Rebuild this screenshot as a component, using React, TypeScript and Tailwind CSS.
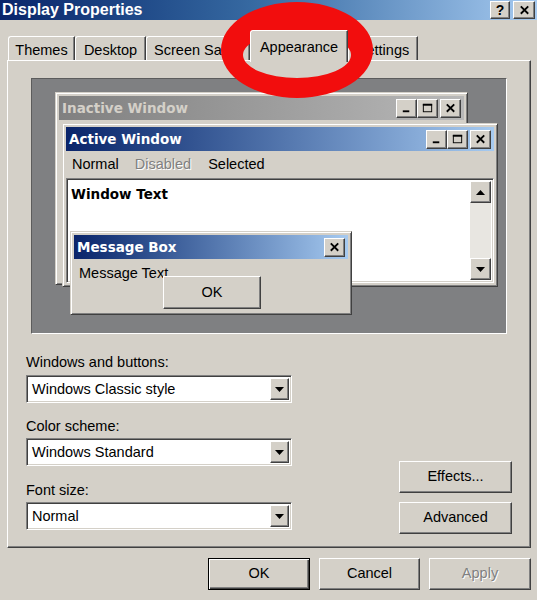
import React from 'react';

const raised =
  'border border-t-white border-l-white border-r-[#404040] border-b-[#404040] bg-[#d4d0c8] shadow-[inset_-1px_-1px_0_#808080]';
const sunken =
  'border border-t-[#808080] border-l-[#808080] border-r-white border-b-white shadow-[inset_1px_1px_0_#404040,inset_-1px_-1px_0_#d4d0c8]';
const frame =
  'border border-t-[#d4d0c8] border-l-[#d4d0c8] border-r-[#404040] border-b-[#404040] bg-[#d4d0c8] shadow-[inset_1px_1px_0_#fff,inset_-1px_-1px_0_#808080]';

type GlyphKind = 'min' | 'max' | 'close';

function Glyph({ kind }: { kind: GlyphKind }) {
  return (
    <svg viewBox="0 0 16 14" className="h-[13px] w-[15px]">
      {kind === 'min' && <rect x="4" y="9" width="7" height="2" fill="#000" />}
      {kind === 'max' && (
        <>
          <rect x="3.5" y="2.5" width="9" height="8" fill="none" stroke="#000" />
          <rect x="3" y="2" width="10" height="2" fill="#000" />
        </>
      )}
      {kind === 'close' && (
        <path d="M4 2.5l8 8M12 2.5l-8 8" stroke="#000" strokeWidth="2" />
      )}
    </svg>
  );
}

function CapButton({ kind }: { kind: GlyphKind }) {
  return (
    <div className={`${raised} flex h-[19px] w-[21px] items-center justify-center`}>
      <Glyph kind={kind} />
    </div>
  );
}

function CapButtons() {
  return (
    <div className="ml-auto flex gap-[2px]">
      <div className="flex">
        <CapButton kind="min" />
        <CapButton kind="max" />
      </div>
      <CapButton kind="close" />
    </div>
  );
}

function Arrow({ dir }: { dir: 'up' | 'down' }) {
  return (
    <svg viewBox="0 0 9 5" className="h-[5px] w-[9px]">
      <path d={dir === 'up' ? 'M4.5 0L9 5H0z' : 'M0 0h9L4.5 5z'} fill="#000" />
    </svg>
  );
}

function Select({ value }: { value: string }) {
  return (
    <div className={`${sunken} flex h-[28px] w-[266px] items-center bg-white p-[2px]`}>
      <span className="flex-1 pl-[3px] text-[14.5px] leading-[18px]">{value}</span>
      <div className={`${raised} flex h-full w-[19px] items-center justify-center`}>
        <Arrow dir="down" />
      </div>
    </div>
  );
}

function Button({
  children,
  className = '',
}: {
  children: React.ReactNode;
  className?: string;
}) {
  return (
    <div
      className={`${raised} flex h-[32px] items-center justify-center text-[14.5px] ${className}`}
    >
      {children}
    </div>
  );
}

const tabs = [
  { label: 'Themes', w: 'w-[67px]' },
  { label: 'Desktop', w: 'w-[71px]' },
  { label: 'Screen Saver', w: 'w-[104px]' },
  { label: 'Appearance', w: 'w-[98px]', active: true },
  { label: 'Settings', w: 'w-[70px]' },
];

export default function App() {
  return (
    <div className="relative flex h-[600px] w-[537px] flex-col overflow-hidden bg-[#d4d0c8] font-['Liberation_Sans',Arial,sans-serif] text-black">
      {/* caption */}
      <div className="flex h-[20px] items-center bg-linear-to-r from-[#0a246a] via-[#3a6ea5] to-[#a6caf0] pl-[2px] pr-[2px]">
        <span className="text-[16px] font-bold leading-[20px] text-white">Display Properties</span>
        <div className="ml-auto flex gap-[3px]">
          <div className={`${raised} flex h-[18px] w-[20px] items-center justify-center text-[14px] font-bold leading-none`}>
            ?
          </div>
          <div className={`${raised} flex h-[18px] w-[22px] items-center justify-center`}>
            <Glyph kind="close" />
          </div>
        </div>
      </div>

      {/* tabs */}
      <div className="mt-[10px] flex h-[30px] items-end pl-[8px]">
        {tabs.map((t) =>
          t.active ? (
            <div
              key={t.label}
              className={`relative z-10 -mb-[2px] flex h-[32px] ${t.w} justify-center rounded-tl-[3px] border-l border-t border-r border-l-white border-t-white border-r-[#404040] bg-[#d4d0c8] pt-[7px] text-[14.5px] leading-[18px] shadow-[inset_-1px_0_0_#808080]`}
            >
              {t.label}
            </div>
          ) : (
            <div
              key={t.label}
              className={`flex h-[24px] ${t.w} justify-center overflow-hidden rounded-tl-[3px] border-l border-t border-r border-l-white border-t-white border-r-[#404040] pt-[4px] text-[14.5px] leading-[18px] shadow-[inset_-1px_0_0_#808080]`}
            >
              {t.label}
            </div>
          ),
        )}
      </div>

      {/* tab panel */}
      <div className="ml-[7px] flex h-[488px] w-[524px] flex-col border border-t-white border-l-white border-r-[#404040] border-b-[#404040] shadow-[inset_-1px_-1px_0_#808080]">
        {/* preview */}
        <div className="relative ml-[23px] mt-[17px] h-[256px] w-[476px] border border-t-[#5c5c5c] border-l-[#5c5c5c] border-r-white border-b-white bg-[#7f8082]">
          {/* inactive window */}
          <div className={`${frame} absolute left-[23px] top-[13px] flex h-[193px] w-[413px] flex-col p-[3px]`}>
            <div className="flex h-[24px] items-center bg-linear-to-r from-[#808080] to-[#b8b8b8] px-[3px]">
              <span className="font-['DejaVu_Sans',sans-serif] text-[13.5px] font-bold text-[#d4d0c8]">
                Inactive Window
              </span>
              <CapButtons />
            </div>
          </div>

          {/* active window */}
          <div className={`${frame} absolute left-[30px] top-[44px] flex h-[164px] w-[436px] flex-col p-[3px]`}>
            <div className="flex h-[24px] shrink-0 items-center bg-linear-to-r from-[#0a246a] to-[#a6caf0] px-[3px]">
              <span className="font-['DejaVu_Sans',sans-serif] text-[13.5px] font-bold text-white">
                Active Window
              </span>
              <CapButtons />
            </div>
            <div className="flex h-[27px] shrink-0 items-center gap-[16px] pl-[6px] text-[14.5px]">
              <span>Normal</span>
              <span className="text-[#808080] [text-shadow:1px_1px_0_#fff]">Disabled</span>
              <span className="ml-[1px]">Selected</span>
            </div>
            <div className={`${sunken} flex flex-1 bg-white p-[2px]`}>
              <div className="flex-1 pl-[2px] pt-[4px] font-['DejaVu_Sans',sans-serif] text-[13.5px] font-bold leading-[18px]">
                Window Text
              </div>
              <div className="flex w-[21px] flex-col bg-[#e8e6e1]">
                <div className={`${raised} flex h-[22px] items-center justify-center`}>
                  <Arrow dir="up" />
                </div>
                <div className="flex-1" />
                <div className={`${raised} flex h-[22px] items-center justify-center`}>
                  <Arrow dir="down" />
                </div>
              </div>
            </div>
          </div>

          {/* message box */}
          <div className={`${frame} absolute left-[38px] top-[152px] flex h-[84px] w-[282px] flex-col p-[3px]`}>
            <div className="flex h-[24px] shrink-0 items-center bg-linear-to-r from-[#0a246a] to-[#a6caf0] px-[3px]">
              <span className="font-['DejaVu_Sans',sans-serif] text-[13.5px] font-bold text-white">
                Message Box
              </span>
              <div className="ml-auto">
                <CapButton kind="close" />
              </div>
            </div>
            <div className="pl-[5px] pt-[5px] text-[14.5px] leading-[18px]">Message Text</div>
            <div className={`${raised} relative -mt-[6px] ml-[89px] flex h-[33px] w-[98px] items-center justify-center text-[14.5px]`}>
              OK
            </div>
          </div>
        </div>

        {/* options */}
        <div className="mt-[19px] flex pl-[18px]">
          <div className="flex flex-col">
            <div className="text-[14.5px] leading-[18px]">Windows and buttons:</div>
            <div className="mt-[4px]">
              <Select value="Windows Classic style" />
            </div>
            <div className="mt-[14px] text-[14.5px] leading-[18px]">Color scheme:</div>
            <div className="mt-[3px]">
              <Select value="Windows Standard" />
            </div>
            <div className="mt-[15px] text-[14.5px] leading-[18px]">Font size:</div>
            <div className="mt-[3px]">
              <Select value="Normal" />
            </div>
          </div>
          <div className="ml-[107px] mt-[108px] flex w-[113px] flex-col gap-[9px]">
            <Button>Effects...</Button>
            <Button>Advanced</Button>
          </div>
        </div>
      </div>

      {/* dialog buttons */}
      <div className="mt-[10px] flex justify-end gap-[9px] pr-[6px]">
        <div className="flex h-[32px] w-[102px] items-center justify-center border border-black bg-[#d4d0c8] text-[14.5px] shadow-[inset_1px_1px_0_#fff,inset_-1px_-1px_0_#404040,inset_-2px_-2px_0_#808080]">
          OK
        </div>
        <Button className="w-[101px]">Cancel</Button>
        <Button className="w-[102px] text-[#808080] [text-shadow:1px_1px_0_#fff]">Apply</Button>
      </div>

      {/* red marker circle */}
      <svg
        className="pointer-events-none absolute left-0 top-0"
        width="537"
        height="120"
        viewBox="0 0 537 120"
      >
        <path
          fillRule="evenodd"
          fill="#f20d0d"
          d="M221 50a76 48 0 1 0 152 0a76 48 0 1 0 -152 0z M243 55a54 23 0 1 0 108 0a54 23 0 1 0 -108 0z"
        />
      </svg>
    </div>
  );
}
